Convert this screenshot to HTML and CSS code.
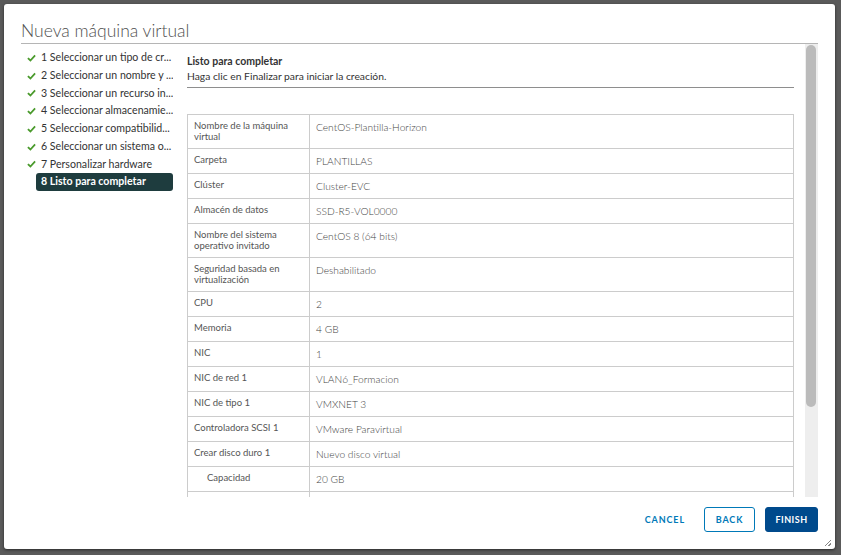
FILE: index.html
```html
<!DOCTYPE html>
<html lang="es">
<head>
<meta charset="utf-8">
<title>Nueva máquina virtual</title>
<link rel="stylesheet" href="styles.css">
</head>
<body>
<div class="modal">
  <header class="modal-header">
    <h1 class="modal-title">Nueva máquina virtual</h1>
  </header>
  <div class="modal-body">
    <nav class="steps">
      <ul class="step-list">
        <li class="step done"><span class="step-icon"><svg viewBox="0 0 10 8" width="10" height="8"><path d="M1 4.2 L3.8 6.8 L9 1.2" fill="none" stroke="#4a9a2c" stroke-width="2"/></svg></span><span class="step-label">1 Seleccionar un tipo de cr...</span></li>
        <li class="step done"><span class="step-icon"><svg viewBox="0 0 10 8" width="10" height="8"><path d="M1 4.2 L3.8 6.8 L9 1.2" fill="none" stroke="#4a9a2c" stroke-width="2"/></svg></span><span class="step-label">2 Seleccionar un nombre y ...</span></li>
        <li class="step done"><span class="step-icon"><svg viewBox="0 0 10 8" width="10" height="8"><path d="M1 4.2 L3.8 6.8 L9 1.2" fill="none" stroke="#4a9a2c" stroke-width="2"/></svg></span><span class="step-label">3 Seleccionar un recurso in...</span></li>
        <li class="step done"><span class="step-icon"><svg viewBox="0 0 10 8" width="10" height="8"><path d="M1 4.2 L3.8 6.8 L9 1.2" fill="none" stroke="#4a9a2c" stroke-width="2"/></svg></span><span class="step-label">4 Seleccionar almacenamie...</span></li>
        <li class="step done"><span class="step-icon"><svg viewBox="0 0 10 8" width="10" height="8"><path d="M1 4.2 L3.8 6.8 L9 1.2" fill="none" stroke="#4a9a2c" stroke-width="2"/></svg></span><span class="step-label">5 Seleccionar compatibilid...</span></li>
        <li class="step done"><span class="step-icon"><svg viewBox="0 0 10 8" width="10" height="8"><path d="M1 4.2 L3.8 6.8 L9 1.2" fill="none" stroke="#4a9a2c" stroke-width="2"/></svg></span><span class="step-label">6 Seleccionar un sistema o...</span></li>
        <li class="step done"><span class="step-icon"><svg viewBox="0 0 10 8" width="10" height="8"><path d="M1 4.2 L3.8 6.8 L9 1.2" fill="none" stroke="#4a9a2c" stroke-width="2"/></svg></span><span class="step-label">7 Personalizar hardware</span></li>
        <li class="step active"><span class="step-icon"></span><span class="step-label">8 Listo para completar</span></li>
      </ul>
    </nav>
    <section class="content">
      <h2 class="content-title">Listo para completar</h2>
      <p class="content-desc">Haga clic en Finalizar para iniciar la creación.</p>
      <hr class="content-rule">
      <table class="summary">
        <colgroup><col class="col-label"><col class="col-value"></colgroup>
        <tr><th>Nombre de la máquina virtual</th><td>CentOS-Plantilla-Horizon</td></tr>
        <tr><th>Carpeta</th><td>PLANTILLAS</td></tr>
        <tr><th>Clúster</th><td>Cluster-EVC</td></tr>
        <tr><th>Almacén de datos</th><td>SSD-R5-VOL0000</td></tr>
        <tr><th>Nombre del sistema operativo invitado</th><td>CentOS 8 (64 bits)</td></tr>
        <tr><th>Seguridad basada en virtualización</th><td>Deshabilitado</td></tr>
        <tr><th>CPU</th><td>2</td></tr>
        <tr><th>Memoria</th><td>4 GB</td></tr>
        <tr><th>NIC</th><td>1</td></tr>
        <tr><th>NIC de red 1</th><td>VLAN6_Formacion</td></tr>
        <tr><th>NIC de tipo 1</th><td>VMXNET 3</td></tr>
        <tr><th>Controladora SCSI 1</th><td>VMware Paravirtual</td></tr>
        <tr><th>Crear disco duro 1</th><td>Nuevo disco virtual</td></tr>
        <tr><th class="sub">Capacidad</th><td>20 GB</td></tr>
        <tr><th class="sub">Almacén de datos</th><td>SSD-R5-VOL0000</td></tr>
      </table>
    </section>
    <div class="scrollbar"><div class="scrollbar-thumb"></div></div>
  </div>
  <footer class="modal-footer">
    <button class="btn btn-link">CANCEL</button>
    <button class="btn btn-outline">BACK</button>
    <button class="btn btn-primary">FINISH</button>
  </footer>
  <span class="resize-grip"></span>
</div>
</body>
</html>
```
FILE: styles.css
```css
html, body {
  margin: 0;
  padding: 0;
}
body {
  width: 841px;
  height: 555px;
  overflow: hidden;
  background: #5a5a5a;
  font-family: "Lato", "Open Sans", sans-serif;
  color: #333;
}
.modal {
  position: relative;
  box-sizing: border-box;
  margin: 4px 0 0 4px;
  width: 831px;
  height: 545px;
  background: #fff;
  border-radius: 3px;
  box-shadow: 0 1px 3px rgba(0, 0, 0, 0.55);
  padding: 0 17px;
  display: flex;
  flex-direction: column;
}
.modal-header {
  height: 39px;
  border-bottom: 1px solid #b5b5b5;
  display: flex;
  align-items: flex-end;
  flex: none;
}
.modal-title {
  margin: 0 0 1px 0;
  font-size: 17.5px;
  font-weight: 300;
  line-height: 22px;
  color: #505050;
}
.modal-body {
  height: 453px;
  display: flex;
  flex: none;
}
.steps {
  width: 159px;
  flex: none;
  padding-top: 5px;
  box-sizing: border-box;
}
.step-list {
  list-style: none;
  margin: 0;
  padding: 0;
}
.step {
  display: flex;
  align-items: center;
  height: 17.75px;
  font-size: 10.6px;
  color: #333;
}
.step-icon {
  width: 15px;
  flex: none;
  display: flex;
  align-items: center;
  padding-left: 6px;
  box-sizing: border-box;
}
.step-icon svg { display: block; }
.step-label {
  width: 137px;
  box-sizing: border-box;
  padding: 0 5px;
  height: 17.75px;
  line-height: 17.75px;
  white-space: nowrap;
  overflow: hidden;
  border-radius: 3px;
}
.step.active .step-label {
  background: #1e3c3e;
  color: #fff;
  font-weight: 700;
}
.content {
  flex: 1;
  overflow: hidden;
  padding: 10px 11px 0 7px;
  box-sizing: border-box;
}
.scrollbar {
  width: 13px;
  flex: none;
  background: #eee;
  padding: 1px 2px 0 1px;
  box-sizing: border-box;
}
.scrollbar-thumb {
  height: 362px;
  background: #bbb;
  border-radius: 5px;
}
.content-title {
  margin: 0;
  font-size: 10.5px;
  font-weight: 700;
  line-height: 15px;
  color: #333;
}
.content-desc {
  margin: 0;
  font-size: 10.3px;
  line-height: 15px;
  color: #333;
}
.content-rule {
  margin: 3px 0 0 0;
  border: 0;
  border-top: 1px solid #8e8e8e;
  height: 0;
}
.summary {
  margin: 26px 0 0 0;
  width: 100%;
  table-layout: fixed;
  border-collapse: collapse;
  border: 1px solid #ccc;
}
.col-label { width: 122px; }
.summary th,
.summary td {
  border: 1px solid #ccc;
  vertical-align: top;
  text-align: left;
}
.summary th {
  padding: 5px 6px 6px 6px;
  font-size: 9.5px;
  line-height: 11px;
  font-weight: 400;
  color: #555;
}
.summary th.sub {
  padding-left: 19px;
}
.summary td {
  padding: 5px 6px 4px 6px;
  font-size: 10.2px;
  line-height: 15px;
  font-weight: 300;
  color: #444;
}
.modal-footer {
  height: 52px;
  flex: none;
  display: flex;
  justify-content: flex-end;
  align-items: flex-start;
  padding-top: 10px;
  box-sizing: border-box;
}
.btn {
  height: 25px;
  padding: 0 12px;
  font-family: inherit;
  font-size: 9px;
  font-weight: 700;
  letter-spacing: 0.9px;
  text-align: center;
  border-radius: 3px;
  border: 1px solid transparent;
  background: transparent;
  cursor: pointer;
}
.btn-link {
  color: #0079b8;
  margin-right: 6px;
}
.btn-outline {
  width: 51px;
  padding: 0;
  color: #0079b8;
  border-color: #0079b8;
  margin-right: 10px;
}
.btn-primary {
  width: 53px;
  padding: 0;
  letter-spacing: 0.5px;
  color: #fff;
  background: #004a8c;
  border-color: #004a8c;
}
.resize-grip {
  position: absolute;
  right: 4px;
  bottom: 3px;
  width: 6px;
  height: 6px;
  background: linear-gradient(135deg, transparent 45%, #888 45%, #888 55%, transparent 55%, transparent 75%, #888 75%, #888 85%, transparent 85%);
}
```
